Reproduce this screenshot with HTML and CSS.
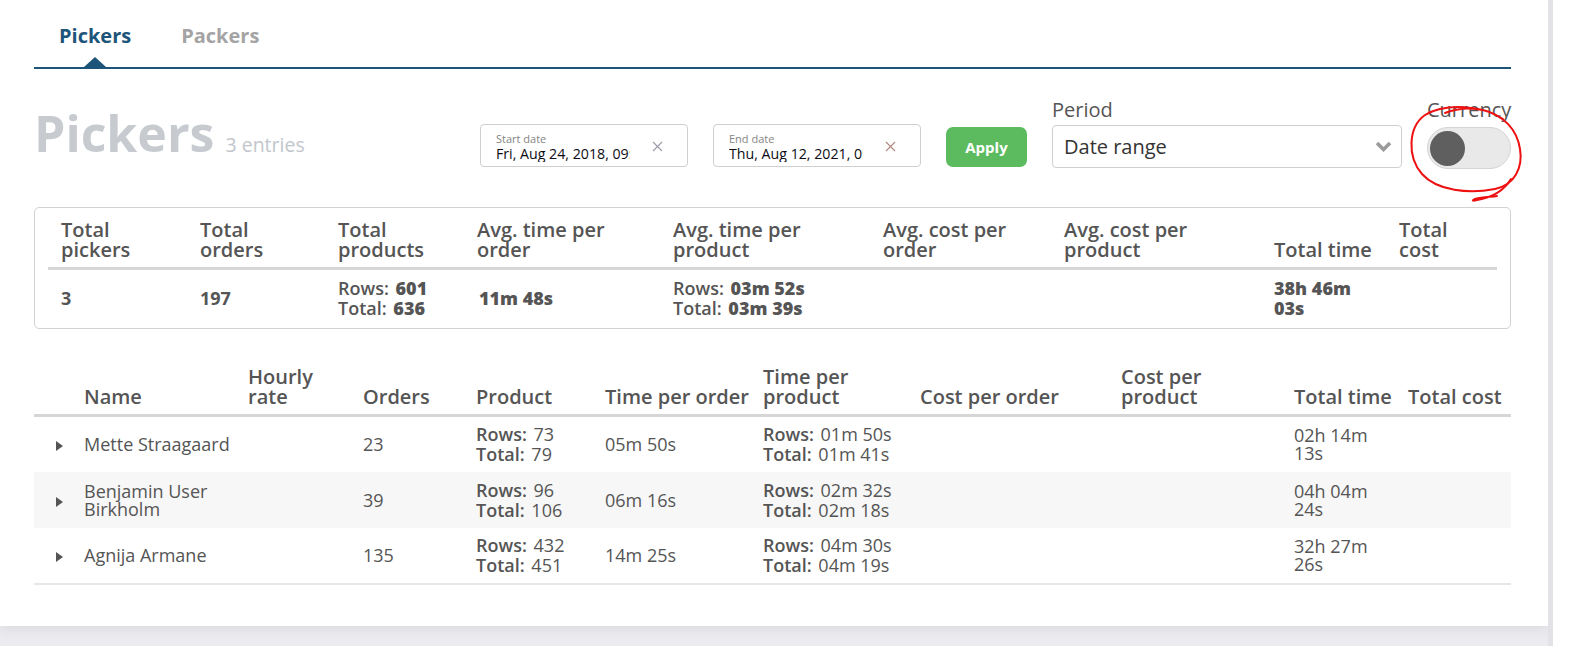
FILE: index.html
```html
<!DOCTYPE html>
<html lang="en">
<head>
<meta charset="utf-8">
<title>Pickers</title>
<link rel="stylesheet" href="styles.css">
</head>
<body>
<div class="page">
  <main class="card">
    <nav class="tabs">
      <a class="tab active">Pickers</a>
      <a class="tab">Packers</a>
    </nav>

    <section class="toolbar">
      <div class="title"><h1>Pickers</h1><span class="count">3 entries</span></div>
      <div class="filters">
        <div class="date-field">
          <div class="date-text">
            <span class="date-label">Start date</span>
            <span class="date-value">Fri, Aug 24, 2018, 09:00</span>
          </div>
          <svg class="clear" width="11" height="11" viewBox="0 0 11 11"><path d="M1 1L10 10M10 1L1 10"/></svg>
        </div>
        <div class="date-field">
          <div class="date-text">
            <span class="date-label">End date</span>
            <span class="date-value">Thu, Aug 12, 2021, 09:00</span>
          </div>
          <svg class="clear end" width="11" height="11" viewBox="0 0 11 11"><path d="M1 1L10 10M10 1L1 10"/></svg>
        </div>
        <button class="apply">Apply</button>
        <div class="field period">
          <span class="field-label">Period</span>
          <div class="select">
            <span>Date range</span>
            <svg class="chevron" width="17" height="11" viewBox="0 0 17 11"><path d="M2 2L8.5 8.5L15 2"/></svg>
          </div>
        </div>
        <div class="field currency">
          <span class="field-label">Currency</span>
          <div class="toggle"><span class="knob"></span></div>
        </div>
      </div>
    </section>

    <section class="summary">
      <table class="sum-table">
        <colgroup>
          <col class="s1"><col class="s2"><col class="s3"><col class="s4"><col class="s5"><col class="s6"><col class="s7"><col class="s8"><col class="s9">
        </colgroup>
        <thead>
          <tr>
            <th>Total pickers</th>
            <th>Total orders</th>
            <th>Total products</th>
            <th>Avg. time per order</th>
            <th>Avg. time per product</th>
            <th>Avg. cost per order</th>
            <th>Avg. cost per product</th>
            <th class="nowrap">Total time</th>
            <th>Total cost</th>
          </tr>
        </thead>
        <tbody>
          <tr>
            <td>3</td>
            <td>197</td>
            <td><div><span class="k">Rows:</span> <b>601</b></div><div><span class="k">Total:</span> <b>636</b></div></td>
            <td><b>11m 48s</b></td>
            <td><div><span class="k">Rows:</span> <b>03m 52s</b></div><div><span class="k">Total:</span> <b>03m 39s</b></div></td>
            <td></td>
            <td></td>
            <td class="tt"><b>38h 46m 03s</b></td>
            <td></td>
          </tr>
        </tbody>
      </table>
    </section>

    <table class="list">
      <colgroup>
        <col class="l0"><col class="l1"><col class="l2"><col class="l3"><col class="l4"><col class="l5"><col class="l6"><col class="l7"><col class="l8"><col class="l9"><col class="l10">
      </colgroup>
      <thead>
        <tr>
          <th></th>
          <th class="name">Name</th>
          <th>Hourly rate</th>
          <th>Orders</th>
          <th>Product</th>
          <th class="nowrap">Time per order</th>
          <th>Time per product</th>
          <th class="nowrap">Cost per order</th>
          <th>Cost per product</th>
          <th class="nowrap">Total time</th>
          <th class="nowrap">Total cost</th>
        </tr>
      </thead>
      <tbody>
        <tr>
          <td class="arrow"><span class="caret"></span></td>
          <td class="name">Mette Straagaard</td>
          <td></td>
          <td>23</td>
          <td><div><b>Rows:</b> <span class="v">73</span></div><div><b>Total:</b> <span class="v">79</span></div></td>
          <td>05m 50s</td>
          <td><div><b>Rows:</b> <span class="v">01m 50s</span></div><div><b>Total:</b> <span class="v">01m 41s</span></div></td>
          <td></td>
          <td></td>
          <td class="tt">02h 14m 13s</td>
          <td></td>
        </tr>
        <tr class="alt">
          <td class="arrow"><span class="caret"></span></td>
          <td class="name">Benjamin User Birkholm</td>
          <td></td>
          <td>39</td>
          <td><div><b>Rows:</b> <span class="v">96</span></div><div><b>Total:</b> <span class="v">106</span></div></td>
          <td>06m 16s</td>
          <td><div><b>Rows:</b> <span class="v">02m 32s</span></div><div><b>Total:</b> <span class="v">02m 18s</span></div></td>
          <td></td>
          <td></td>
          <td class="tt">04h 04m 24s</td>
          <td></td>
        </tr>
        <tr>
          <td class="arrow"><span class="caret"></span></td>
          <td class="name">Agnija Armane</td>
          <td></td>
          <td>135</td>
          <td><div><b>Rows:</b> <span class="v">432</span></div><div><b>Total:</b> <span class="v">451</span></div></td>
          <td>14m 25s</td>
          <td><div><b>Rows:</b> <span class="v">04m 30s</span></div><div><b>Total:</b> <span class="v">04m 19s</span></div></td>
          <td></td>
          <td></td>
          <td class="tt">32h 27m 26s</td>
          <td></td>
        </tr>
      </tbody>
    </table>
  </main>

  <svg class="scribble" width="140" height="115" viewBox="0 0 140 115">
    <path d="M106 22 C86 8, 48 6, 28 18 C11 30, 10 60, 25 77 C40 94, 72 97, 98 92 C118 88, 126 70, 123 52 C120 32, 106 18, 86 13 C72 10, 58 12, 48 16"/>
    <path d="M114 82 C108 92, 98 100, 80 103 C76 104, 74 104, 78 102 C86 100, 94 100, 100 99"/>
  </svg>
  <span class="mark"></span>
</div>
</body>
</html>
```

FILE: styles.css
```css
* { box-sizing: border-box; }

html, body {
  margin: 0;
  padding: 0;
  background: #ffffff;
}

body {
  font-family: "Open Sans", "Liberation Sans", sans-serif;
  color: #555;
}

.page {
  position: relative;
  width: 1553px;
  height: 646px;
  background: #ececf0;
  border-right: 5px solid #e2e2e7;
  overflow: hidden;
}

.card {
  width: 1548px;
  height: 626px;
  background: #fff;
  padding: 0 37px 0 34px;
  box-shadow: 0 3px 12px rgba(0, 0, 0, 0.08);
}

/* Tabs */
.tabs {
  display: flex;
  height: 69px;
  border-bottom: 2px solid #1d5479;
}

.tab {
  position: relative;
  padding: 23px 25px 0;
  font-size: 20px;
  line-height: 26px;
  font-weight: 700;
  color: #a4a4a4;
}

.tab.active {
  color: #1d5479;
}

.tab.active::after {
  content: "";
  position: absolute;
  left: 50%;
  bottom: 0;
  margin-left: -11px;
  border-left: 11px solid transparent;
  border-right: 11px solid transparent;
  border-bottom: 10px solid #1d5479;
}

/* Toolbar */
.toolbar {
  display: flex;
  align-items: flex-start;
  padding-top: 30px;
}

.title {
  margin-top: 8px;
  white-space: nowrap;
}

.title h1 {
  display: inline;
  margin: 0;
  font-size: 50px;
  line-height: 52px;
  font-weight: 700;
  color: #c7cbd0;
}

.count {
  margin-left: 11px;
  font-size: 19.5px;
  color: #c2c6cc;
}

.filters {
  margin-left: auto;
  display: flex;
  align-items: flex-start;
  gap: 25px;
}

.date-field {
  margin-top: 25px;
  width: 208px;
  height: 43px;
  border: 1px solid #cfcfcf;
  border-radius: 4px;
  display: flex;
  align-items: center;
  padding-left: 15px;
}

.date-text {
  width: 134px;
  overflow: hidden;
  white-space: nowrap;
  padding-top: 2px;
}

.date-label {
  display: block;
  font-size: 11px;
  line-height: 13px;
  color: #858585;
}

.date-value {
  display: block;
  font-size: 14.2px;
  line-height: 17px;
  color: #0c0c14;
}

.clear {
  margin-left: 22px;
  margin-top: 2px;
  fill: none;
  stroke: #9a9aa8;
  stroke-width: 1.1;
}

.clear.end {
  stroke: #b08880;
}

.apply {
  margin-top: 28px;
  width: 81px;
  height: 40px;
  border: 0;
  border-radius: 7px;
  background: #5cbb5f;
  color: #fff;
  font-family: "Open Sans", "Liberation Sans", sans-serif;
  font-size: 15px;
  font-weight: 700;
  padding: 0;
}

.field {
  display: flex;
  flex-direction: column;
}

.field-label {
  font-size: 20px;
  line-height: 22px;
  color: #555;
  margin-bottom: 4px;
}

.period {
  width: 350px;
}

.select {
  height: 43px;
  border: 1px solid #cfcfcf;
  border-radius: 4px;
  display: flex;
  align-items: center;
  justify-content: space-between;
  padding: 0 9px 0 11px;
  font-size: 20px;
  color: #333;
}

.chevron {
  fill: none;
  stroke: #9b9b9b;
  stroke-width: 3.6;
}

.currency {
  width: 84px;
}

.toggle {
  margin-top: 2px;
  width: 84px;
  height: 42px;
  border-radius: 21px;
  background: #e9e9e9;
  border: 1px solid #d4d4d4;
  display: flex;
  align-items: center;
  padding-left: 2px;
}

.knob {
  width: 35px;
  height: 35px;
  border-radius: 50%;
  background: #5f5f5f;
}

/* Summary */
.summary {
  margin-top: 38px;
  border: 1px solid #d2d2d2;
  border-radius: 5px;
  padding: 0 13px;
}

.sum-table {
  width: 100%;
  border-collapse: collapse;
  table-layout: fixed;
}

.s1 { width: 139px; }
.s2 { width: 138px; }
.s3 { width: 139px; }
.s4 { width: 196px; }
.s5 { width: 210px; }
.s6 { width: 181px; }
.s7 { width: 210px; }
.s8 { width: 125px; }
.s9 { width: 111px; }

.sum-table th {
  text-align: left;
  vertical-align: bottom;
  font-size: 20px;
  line-height: 19.5px;
  font-weight: 600;
  color: #555;
  padding: 12px 20px 8px 13px;
  border-bottom: 3px solid #d6d6d6;
}

.sum-table td {
  vertical-align: middle;
  font-size: 18px;
  line-height: 20px;
  font-weight: 700;
  color: #555;
  padding: 8px 20px 10px 13px;
}

.sum-table .k {
  font-weight: 600;
}

.sum-table td b {
  margin-left: 2px;
}

.sum-table td.tt {
  padding-right: 32px;
}

.sum-table td.tt b {
  margin-left: 0;
}

.nowrap {
  white-space: nowrap;
}

/* List */
.list {
  margin-top: 38px;
  width: 100%;
  border-collapse: collapse;
  table-layout: fixed;
}

.l0 { width: 42px; }
.l1 { width: 164px; }
.l2 { width: 115px; }
.l3 { width: 113px; }
.l4 { width: 129px; }
.l5 { width: 158px; }
.l6 { width: 157px; }
.l7 { width: 201px; }
.l8 { width: 173px; }
.l9 { width: 114px; }
.l10 { width: 111px; }

.list th {
  text-align: left;
  vertical-align: bottom;
  font-size: 20px;
  line-height: 20px;
  font-weight: 600;
  color: #555;
  padding: 0 20px 7px 8px;
  border-bottom: 3px solid #d6d6d6;
}

.list td {
  height: 56px;
  vertical-align: middle;
  font-size: 18px;
  line-height: 18px;
  color: #555;
  padding: 0 20px 0 8px;
}

.list td div {
  line-height: 20px;
}

.list td b {
  font-weight: 600;
}

.list .v {
  margin-left: 2px;
}

.list .name {
  padding-right: 4px;
}

.list td.tt {
  padding-right: 24px;
}

.list tbody tr:last-child td {
  border-bottom: 2px solid #e6e6e6;
}

.list tr.alt td {
  background: #f7f7f7;
}

.list td.arrow {
  padding: 0 0 0 22px;
}

.caret {
  display: inline-block;
  width: 0;
  height: 0;
  border-left: 7px solid #555;
  border-top: 5.5px solid transparent;
  border-bottom: 5.5px solid transparent;
  vertical-align: middle;
}

/* Annotation overlay */
.scribble {
  position: absolute;
  left: 1397px;
  top: 97px;
  fill: none;
  stroke: #ee1111;
  stroke-width: 2;
  stroke-linecap: round;
  stroke-linejoin: round;
}

.mark {
  position: absolute;
  left: 1585px;
  top: 300px;
  width: 2px;
  height: 3px;
  background: #ee1111;
}
```
